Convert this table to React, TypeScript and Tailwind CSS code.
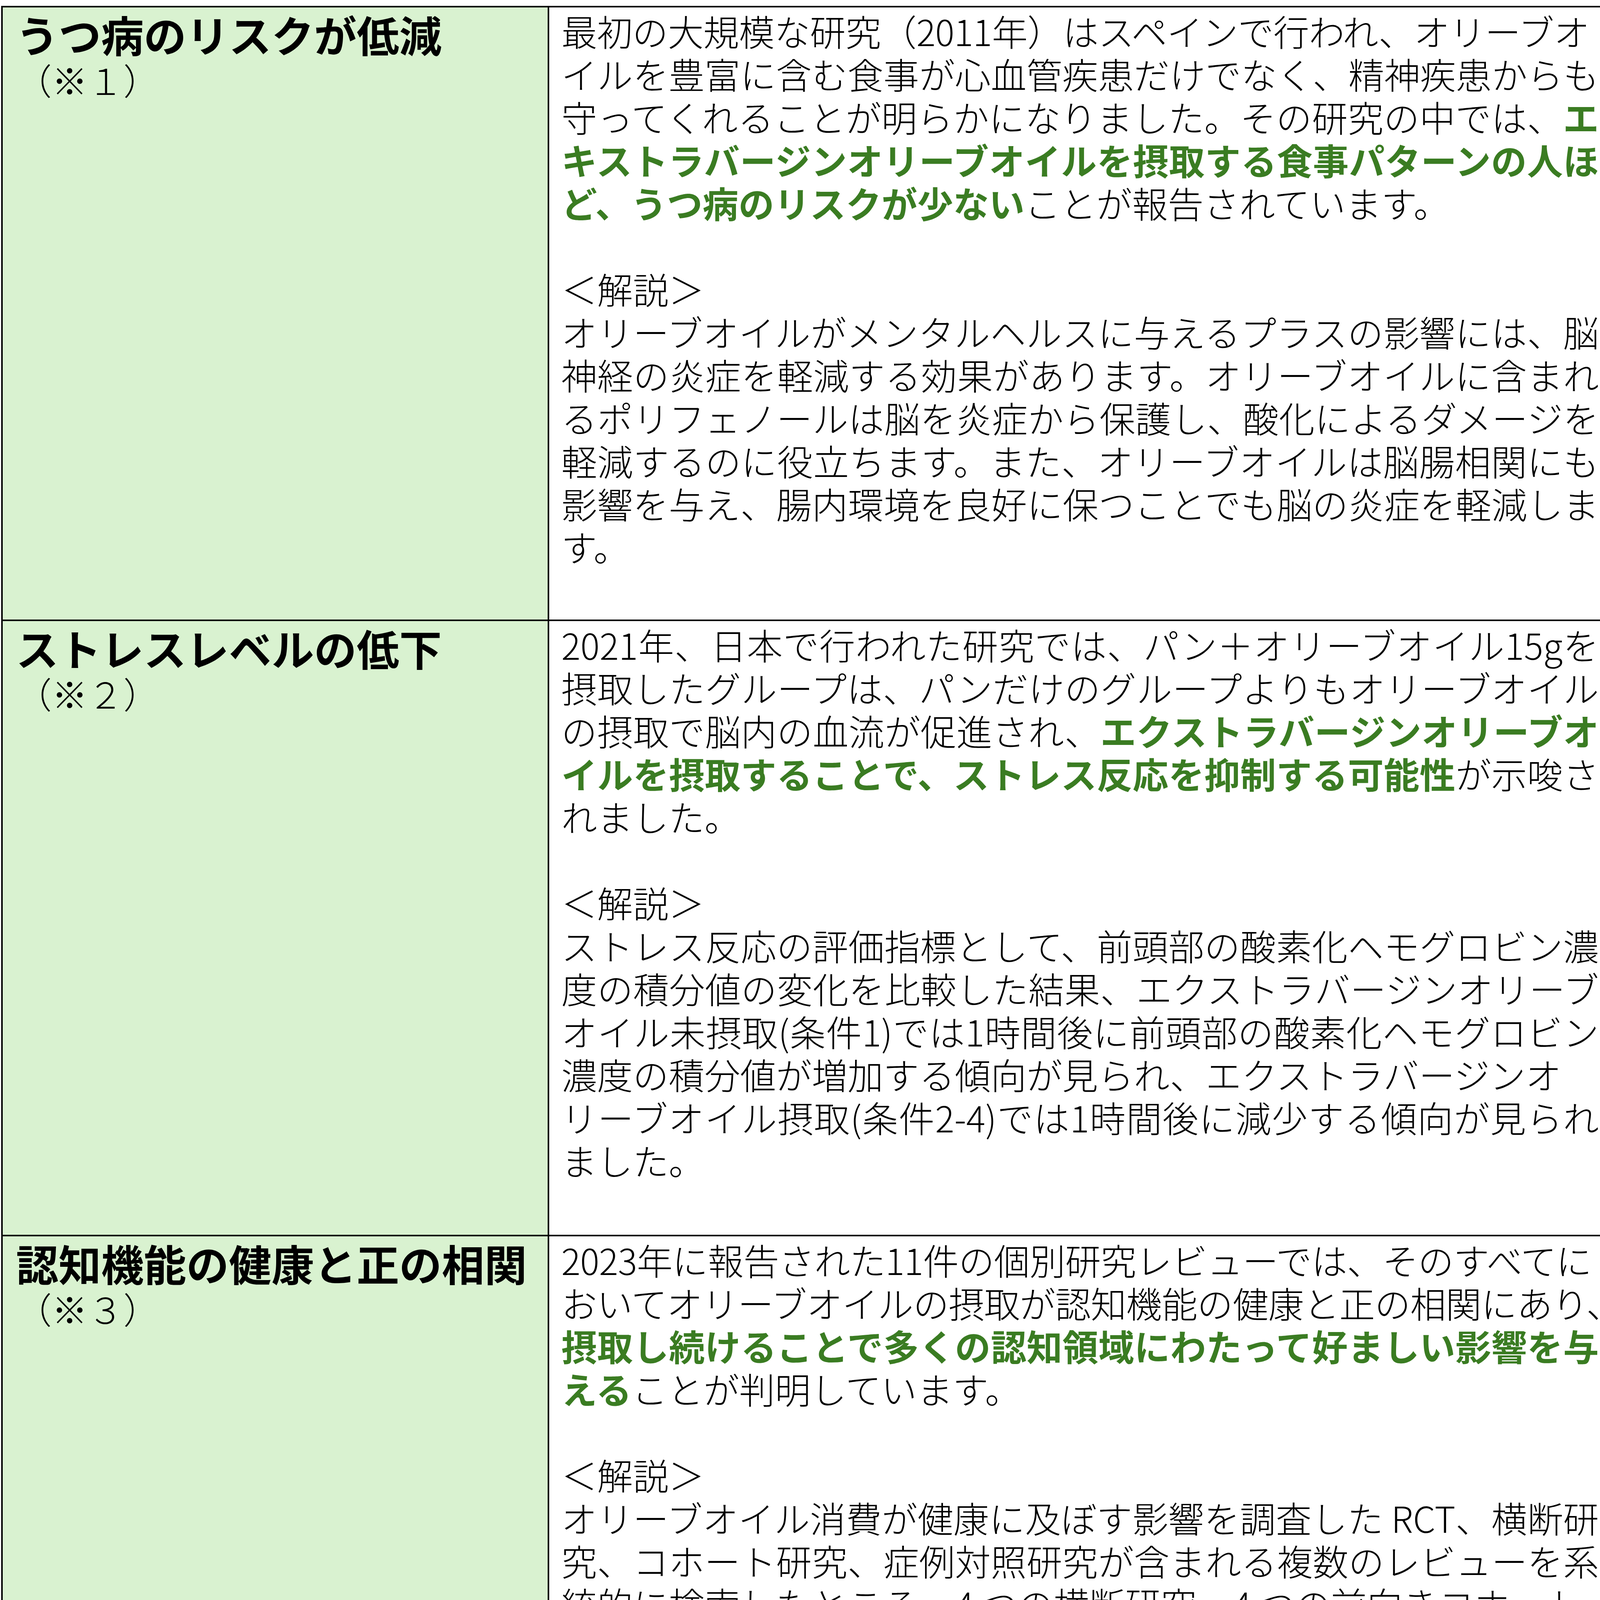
import React from "react";

type L = { c: React.ReactNode; j?: boolean; hang?: boolean; tight?: boolean };

const G = ({ children }: { children: React.ReactNode }) => (
  <span className="font-bold text-[#3A7C22]">{children}</span>
);

const BLANK: L = { c: "" };

const row1: L[] = [
  { c: "最初の大規模な研究（2011年）はスペインで行われ、オリーブオ", tight: true },
  { c: "イルを豊富に含む食事が心血管疾患だけでなく、精神疾患からも", j: true },
  { c: <>守ってくれることが明らかになりました。その研究の中では、<G>エ</G></>, j: true },
  { c: <G>キストラバージンオリーブオイルを摂取する食事パターンの人ほ</G>, j: true },
  { c: <><G>ど、うつ病のリスクが少ない</G>ことが報告されています。</> },
  BLANK,
  { c: "＜解説＞" },
  { c: "オリーブオイルがメンタルヘルスに与えるプラスの影響には、脳", j: true },
  { c: "神経の炎症を軽減する効果があります。オリーブオイルに含まれ", j: true },
  { c: "るポリフェノールは脳を炎症から保護し、酸化によるダメージを", j: true },
  { c: "軽減するのに役立ちます。また、オリーブオイルは脳腸相関にも", j: true },
  { c: "影響を与え、腸内環境を良好に保つことでも脳の炎症を軽減しま", j: true },
  { c: "す。" },
];

const row2: L[] = [
  { c: "2021年、日本で行われた研究では、パン＋オリーブオイル15gを", j: true },
  { c: "摂取したグループは、パンだけのグループよりもオリーブオイル", j: true },
  { c: <>の摂取で脳内の血流が促進され、<G>エクストラバージンオリーブオ</G></>, j: true },
  { c: <><G>イルを摂取することで、ストレス反応を抑制する可能性</G>が示唆さ</>, j: true },
  { c: "れました。" },
  BLANK,
  { c: "＜解説＞" },
  { c: "ストレス反応の評価指標として、前頭部の酸素化ヘモグロビン濃", j: true },
  { c: "度の積分値の変化を比較した結果、エクストラバージンオリーブ", j: true },
  { c: "オイル未摂取(条件1)では1時間後に前頭部の酸素化ヘモグロビン", j: true },
  { c: "濃度の積分値が増加する傾向が見られ、エクストラバージンオ" },
  { c: "リーブオイル摂取(条件2-4)では1時間後に減少する傾向が見られ", j: true },
  { c: "ました。" },
];

const row3: L[] = [
  { c: "2023年に報告された11件の個別研究レビューでは、そのすべてに", tight: true },
  { c: "おいてオリーブオイルの摂取が認知機能の健康と正の相関にあり、", tight: true },
  { c: <G>摂取し続けることで多くの認知領域にわたって好ましい影響を与</G>, j: true },
  { c: <><G>える</G>ことが判明しています。</> },
  BLANK,
  { c: "＜解説＞" },
  { c: "オリーブオイル消費が健康に及ぼす影響を調査した RCT、横断研", j: true },
  { c: "究、コホート研究、症例対照研究が含まれる複数のレビューを系", j: true },
  { c: "統的に検索したところ、4 つの横断研究、4 つの前向きコホート" },
  { c: "研究、および 3 つの RCT からなる 11 件の研究が特定されました", hang: true },
  { c: "コホート研究とRCTでは、オリーブオイルの摂取が、長期にわ" },
  { c: "たって多くの認知領域にわたって認知能力に好ましい影響を与え", j: true },
  { c: "ることが一貫して判明しています。" },
];

function Line({ l }: { l: L }) {
  if (l.hang) {
    return (
      <div className="flex h-[110px] whitespace-nowrap">
        <span className="block w-[2660px] shrink-0 text-justify [text-align-last:justify]">{l.c}</span>
        <span className="shrink-0 tracking-[-20px]">。</span>
      </div>
    );
  }
  if (l.tight) {
    return <div className="h-[110px] whitespace-nowrap tracking-[-0.7px]">{l.c}</div>;
  }
  return (
    <div
      className={
        l.j
          ? "h-[110px] w-[2656px] whitespace-nowrap text-justify [text-align-last:justify]"
          : "h-[110px] whitespace-nowrap"
      }
    >
      {l.c}
    </div>
  );
}

function Row({
  title,
  note,
  lines,
  h,
  last,
}: {
  title: string;
  note: string;
  lines: L[];
  h: string;
  last?: boolean;
}) {
  return (
    <div className={`flex ${h} ${last ? "" : "border-b-4 border-black"}`}>
      <div className="w-[1399px] shrink-0 border-r-4 border-black bg-[#D9F2D0] pl-[34px] pt-[7px]">
        <div className="whitespace-nowrap text-[109px] font-bold leading-[122px]">{title}</div>
        <div className="whitespace-nowrap text-[91.6px] font-light leading-[110px]">{note}</div>
      </div>
      <div className="min-w-0 flex-1 pl-[31px] pt-[4px] text-[91.6px] font-light leading-[110px]">
        {lines.map((l, i) => (
          <Line key={i} l={l} />
        ))}
      </div>
    </div>
  );
}

export default function App() {
  return (
    <div
      className="w-full overflow-hidden bg-white pl-[3px] pt-[15px] text-black"
      style={{ fontFamily: '"Noto Sans CJK JP", "Noto Sans", sans-serif' }}
    >
      <div className="w-[4169px] border-4 border-black">
        <Row title="うつ病のリスクが低減" note="（※１）" lines={row1} h="h-[1571px]" />
        <Row title="ストレスレベルの低下" note="（※２）" lines={row2} h="h-[1575px]" />
        <Row title="認知機能の健康と正の相関" note="（※３）" lines={row3} h="h-[1569px]" last />
      </div>
    </div>
  );
}
